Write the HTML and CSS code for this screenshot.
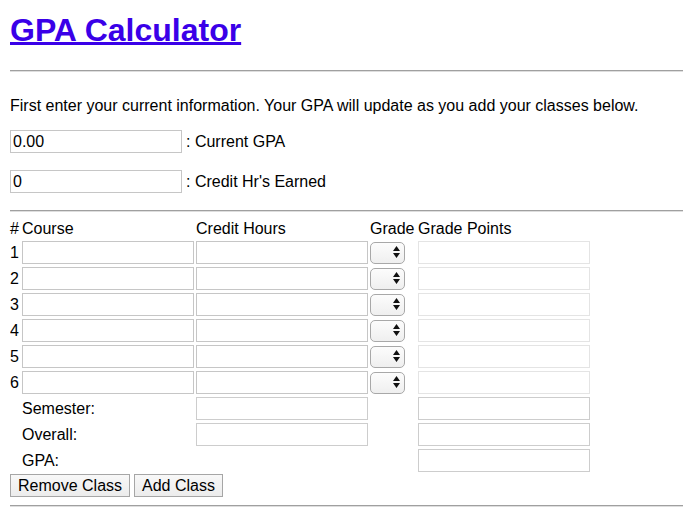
FILE: index.html
```html
<!DOCTYPE html>
<html lang="en">
<head>
<meta charset="utf-8">
<title>GPA Calculator</title>
<link rel="stylesheet" href="styles.css">
</head>
<body>
<h1 class="title"><a href="#">GPA Calculator</a></h1>
<hr class="rule">
<p class="intro">First enter your current information. Your GPA will update as you add your classes below.</p>
<div class="field"><input class="txt" type="text" value="0.00"><span>: Current GPA</span></div>
<div class="field"><input class="txt" type="text" value="0"><span>: Credit Hr's Earned</span></div>
<hr class="rule">
<div class="calc">
  <div class="hd">#</div><div class="hd">Course</div><div class="hd">Credit Hours</div><div class="hd">Grade</div><div class="hd">Grade Points</div>

  <div class="num">1</div><input class="cell" type="text"><input class="cell" type="text"><div class="gradebox"><select class="grade"><option></option><option>A</option><option>B</option><option>C</option><option>D</option><option>F</option></select><svg class="arrows" width="7" height="12" viewBox="0 0 7 12"><path d="M0 5L3.5 0L7 5Z M0 7L7 7L3.5 12Z" fill="#111"/></svg></div><input class="cell gp" type="text" disabled>

  <div class="num">2</div><input class="cell" type="text"><input class="cell" type="text"><div class="gradebox"><select class="grade"><option></option><option>A</option><option>B</option><option>C</option><option>D</option><option>F</option></select><svg class="arrows" width="7" height="12" viewBox="0 0 7 12"><path d="M0 5L3.5 0L7 5Z M0 7L7 7L3.5 12Z" fill="#111"/></svg></div><input class="cell gp" type="text" disabled>

  <div class="num">3</div><input class="cell" type="text"><input class="cell" type="text"><div class="gradebox"><select class="grade"><option></option><option>A</option><option>B</option><option>C</option><option>D</option><option>F</option></select><svg class="arrows" width="7" height="12" viewBox="0 0 7 12"><path d="M0 5L3.5 0L7 5Z M0 7L7 7L3.5 12Z" fill="#111"/></svg></div><input class="cell gp" type="text" disabled>

  <div class="num">4</div><input class="cell" type="text"><input class="cell" type="text"><div class="gradebox"><select class="grade"><option></option><option>A</option><option>B</option><option>C</option><option>D</option><option>F</option></select><svg class="arrows" width="7" height="12" viewBox="0 0 7 12"><path d="M0 5L3.5 0L7 5Z M0 7L7 7L3.5 12Z" fill="#111"/></svg></div><input class="cell gp" type="text" disabled>

  <div class="num">5</div><input class="cell" type="text"><input class="cell" type="text"><div class="gradebox"><select class="grade"><option></option><option>A</option><option>B</option><option>C</option><option>D</option><option>F</option></select><svg class="arrows" width="7" height="12" viewBox="0 0 7 12"><path d="M0 5L3.5 0L7 5Z M0 7L7 7L3.5 12Z" fill="#111"/></svg></div><input class="cell gp" type="text" disabled>

  <div class="num">6</div><input class="cell" type="text"><input class="cell" type="text"><div class="gradebox"><select class="grade"><option></option><option>A</option><option>B</option><option>C</option><option>D</option><option>F</option></select><svg class="arrows" width="7" height="12" viewBox="0 0 7 12"><path d="M0 5L3.5 0L7 5Z M0 7L7 7L3.5 12Z" fill="#111"/></svg></div><input class="cell gp" type="text" disabled>

  <div class="lbl">Semester:</div><input class="cell total col3" type="text"><input class="cell total col5" type="text">
  <div class="lbl">Overall:</div><input class="cell total col3" type="text"><input class="cell total col5" type="text">
  <div class="lbl">GPA:</div><input class="cell total col5" type="text">
</div>
<div class="actions"><button class="btn" type="button">Remove Class</button><button class="btn" type="button">Add Class</button></div>
<hr class="rule last">
</body>
</html>
```
FILE: styles.css
```css
html, body {
  background: #fff;
}
body {
  margin: 0 0 0 10px;
  font-family: "Liberation Sans", Arial, Helvetica, sans-serif;
  font-size: 16px;
  color: #000;
}
.title {
  margin: 12px 0 21px;
  font-size: 32px;
  line-height: 37px;
  font-weight: bold;
}
.title a {
  color: #3a00e8;
  text-decoration: underline;
  text-decoration-thickness: 3px;
  text-underline-offset: 1px;
}
.rule {
  margin: 0;
  height: 0;
  border: 0;
  border-top: 1px solid #a0a0a0;
  border-bottom: 1px solid #dedede;
}
.intro {
  margin: 25px 0 15px;
  line-height: 18px;
}
.field {
  display: flex;
  align-items: center;
  gap: 4px;
  height: 23px;
  margin-bottom: 17px;
}
input {
  font-family: "Liberation Sans", Arial, Helvetica, sans-serif;
  font-size: 16px;
  color: #000;
}
.txt {
  box-sizing: border-box;
  width: 172px;
  height: 23px;
  margin: 0;
  padding: 0 2px;
  border: 1px solid #c6c6c6;
  outline: none;
}
.calc {
  display: grid;
  grid-template-columns: 10px 172px 172px 46px 172px;
  grid-template-rows: 21px;
  grid-auto-rows: 23px;
  column-gap: 2px;
  row-gap: 3px;
  margin-top: 5px;
}
.hd {
  align-self: end;
  line-height: 18px;
  white-space: nowrap;
}
.num, .lbl {
  align-self: center;
  line-height: 18px;
}
.lbl {
  grid-column: 2;
}
.cell {
  box-sizing: border-box;
  width: 172px;
  height: 23px;
  margin: 0;
  padding: 0 2px;
  border: 1px solid #c6c6c6;
  background: #fff;
}
.cell.gp {
  border-color: #e4e4e4;
  background: #fff;
}
.cell.total {
  border-color: #cdcdcd;
}
.col3 { grid-column: 3; }
.col5 { grid-column: 5; }
.gradebox {
  position: relative;
  width: 35px;
  height: 22px;
  align-self: center;
}
.grade {
  appearance: none;
  -webkit-appearance: none;
  box-sizing: border-box;
  width: 35px;
  height: 22px;
  margin: 0;
  padding: 0;
  border: 1px solid #a8a8a8;
  border-radius: 5px;
  background: linear-gradient(#fcfcfc, #efefef);
  font-size: 13px;
  color: transparent;
}
.arrows {
  position: absolute;
  right: 5px;
  top: 4px;
  pointer-events: none;
}
.actions {
  display: flex;
  gap: 4px;
  margin-top: 2px;
}
.btn {
  box-sizing: border-box;
  height: 23px;
  margin: 0;
  padding: 0 7px;
  border: 1px solid #a6a6a6;
  border-radius: 0;
  background: linear-gradient(#f8f8f8, #ececec);
  font-family: "Liberation Sans", Arial, Helvetica, sans-serif;
  font-size: 16px;
  color: #000;
  line-height: 18px;
}
.rule.last {
  margin-top: 8px;
}
```
